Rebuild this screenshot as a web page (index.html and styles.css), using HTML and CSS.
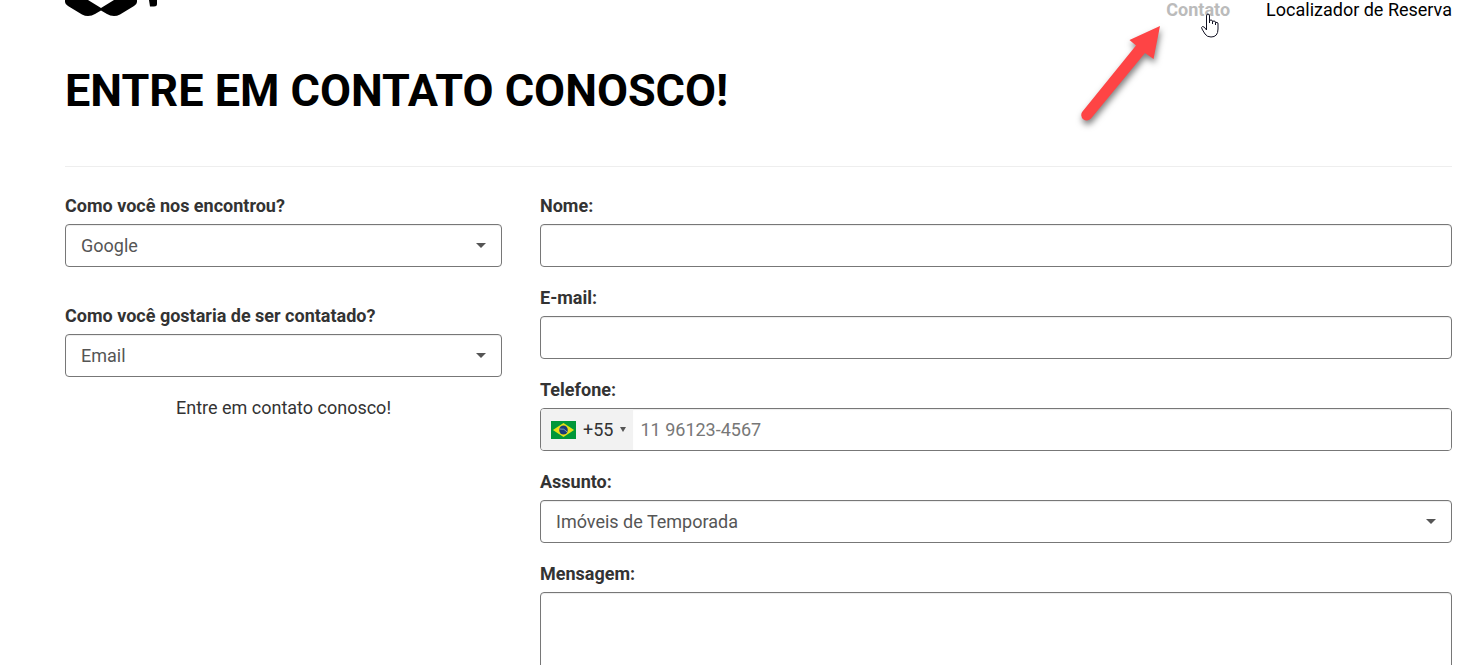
FILE: index.html
```html
<!DOCTYPE html>
<html lang="pt-br">

<head>
    <meta charset="UTF-8">
    <meta name="viewport" content="width=device-width, initial-scale=1.0">
    <title>Contato</title>
    <link rel="stylesheet" href="styles.css">
</head>

<body>
    <!-- Cabeçalho -->
    <header class="topo">
        <a class="logo" href="#" aria-label="Início">
            <svg width="94" height="17" viewBox="0 0 94 17">
                <path d="M0 0H23L36 8L49 0H72V2Q72 4 69 6L55 14.500Q52 16 49 16Q45 16 42 14L36 10.500L30 14Q27 16 23 16Q20 16 17 14.500L3 6Q0 4 0 2Z" />
                <path d="M84 0H92V4Q92 6.500 89 6.500H85Z" />
            </svg>
        </a>
        <nav class="menu">
            <a class="ativo" href="#contato">Contato</a>
            <a href="#reserva">Localizador de Reserva</a>
        </nav>
    </header>

    <main class="conteudo">
        <h1>ENTRE EM CONTATO CONOSCO!</h1>

        <form class="formulario" id="contato">
            <!-- Coluna da esquerda -->
            <div class="coluna preferencias">
                <div class="campo">
                    <label for="origem">Como você nos encontrou?</label>
                    <div class="selecao">
                        <select id="origem">
                            <option>Google</option>
                            <option>Facebook</option>
                        </select>
                    </div>
                </div>
                <div class="campo">
                    <label for="canal">Como você gostaria de ser contatado?</label>
                    <div class="selecao">
                        <select id="canal">
                            <option>Email</option>
                            <option>Telefone</option>
                        </select>
                    </div>
                </div>
                <p class="chamada">Entre em contato conosco!</p>
            </div>

            <!-- Coluna da direita -->
            <div class="coluna dados">
                <div class="campo">
                    <label for="nome">Nome:</label>
                    <input type="text" id="nome">
                </div>
                <div class="campo">
                    <label for="email">E-mail:</label>
                    <input type="email" id="email">
                </div>
                <div class="campo">
                    <label for="telefone">Telefone:</label>
                    <div class="telefone">
                        <button type="button" class="pais">
                            <svg width="25" height="18" viewBox="0 0 26 18" preserveAspectRatio="none">
                                <path fill="#009739" d="M0 0h26v18H0z" />
                                <path fill="#e6e017" d="M13 2l11 7-11 7L2 9z" />
                                <circle cx="13" cy="9" r="4.500" fill="#1b3a78" />
                                <path fill="none" stroke="#7f9bb8" d="M8.800 8q5-1 8 3" />
                            </svg>
                            <span>+55</span>
                            <span class="seta-pais"></span>
                        </button>
                        <input type="tel" id="telefone" placeholder="11 96123-4567">
                    </div>
                </div>
                <div class="campo">
                    <label for="assunto">Assunto:</label>
                    <div class="selecao">
                        <select id="assunto">
                            <option>Imóveis de Temporada</option>
                            <option>Outros</option>
                        </select>
                    </div>
                </div>
                <div class="campo">
                    <label for="mensagem">Mensagem:</label>
                    <textarea id="mensagem"></textarea>
                </div>
            </div>
        </form>
    </main>

    <!-- Seta e cursor sobre o menu -->
    <svg class="indicador" width="100" height="120" viewBox="0 0 100 120">
        <path d="M88 20L57.500 34L64 39.500L10.500 105.500A5.500 5.500 0 0 0 19 112.500L73 47L81.500 53Z" />
    </svg>
    <svg class="cursor" width="20" height="26" viewBox="0 0 20 26">
        <path d="M6.500 15V3Q6.500 1 8 1T9.500 3V10V8Q9.500 7 11 7T12.500 8.500V11V9Q12.500 8 14 8T15.500 9.500V12V10Q15.500 9 17 9.500T18 11V16Q18 24 11 24Q7 24 5 21L2 16Q1 14 2.500 13.500T6.500 17Z" />
    </svg>
</body>

</html>
```
FILE: styles.css
```css
* {
    margin: 0;
    padding: 0;
    box-sizing: border-box;
}

body {
    position: relative;
    background-color: #fff;
    color: #333;
    font-family: Roboto, Arial, sans-serif;
    font-size: 18px;
    line-height: 26px;
    padding: 0 8px 0 65px;
}

input,
select,
textarea,
button {
    font: inherit;
    color: #555;
}

/* Cabeçalho */
.topo {
    display: flex;
    justify-content: space-between;
    height: 61px;
}

.logo svg {
    display: block;
}

.menu {
    display: flex;
    gap: 36px;
    line-height: 20px;
}

.menu a {
    color: #000;
    text-decoration: none;
}

.menu .ativo {
    color: #bbb;
    font-weight: bold;
}

h1 {
    color: #000;
    font-size: 45px;
    line-height: 60px;
    font-weight: bold;
    padding-bottom: 45px;
    border-bottom: 1px solid #eee;
}

/* Formulário */
.formulario {
    display: grid;
    grid-template-columns: 437fr 912fr;
    column-gap: 38px;
    padding-top: 26px;
}

.coluna {
    display: flex;
    flex-direction: column;
    gap: 18px;
}

.preferencias {
    gap: 36px;
}

.campo label {
    display: block;
    color: #333;
    font-weight: bold;
    margin-bottom: 5px;
}

.campo input,
.campo select,
.campo textarea {
    display: block;
    width: 100%;
    height: 43px;
    padding: 0 15px;
    background-color: #fff;
    border: 1px solid #777;
    border-radius: 4px;
    box-shadow: inset 0 1px 1px rgba(0, 0, 0, 0.075);
}

.campo select {
    appearance: none;
}

.campo textarea {
    height: 160px;
    padding: 8px 15px;
}

.selecao {
    position: relative;
}

.selecao::after {
    content: "";
    position: absolute;
    top: 19px;
    right: 16px;
    border: 5px solid transparent;
    border-top-color: #555;
    border-bottom: 0;
    pointer-events: none;
}

/* Telefone com código do país */
.telefone {
    display: flex;
    border: 1px solid #777;
    border-radius: 4px;
    overflow: hidden;
}

.telefone input {
    flex: 1;
    height: 41px;
    padding: 0 7px;
    border: 0;
    border-radius: 0;
}

.telefone input::placeholder {
    color: #777;
}

.pais {
    display: flex;
    align-items: center;
    gap: 7px;
    padding: 0 7px 0 10px;
    background-color: #f2f2f2;
    border: 0;
    color: #333;
}

.seta-pais {
    border: 3px solid transparent;
    border-top: 5px solid #555;
    border-bottom: 0;
}

.chamada {
    text-align: center;
    margin-top: -18px;
}

/* Seta e cursor */
.indicador {
    position: absolute;
    top: 6px;
    right: 288px;
    fill: #fe4445;
    filter: drop-shadow(1px 4px 3px rgba(0, 0, 0, 0.5));
    pointer-events: none;
}

.cursor {
    position: absolute;
    top: 13px;
    right: 240px;
    fill: #fff;
    stroke: #112;
    pointer-events: none;
}
```
